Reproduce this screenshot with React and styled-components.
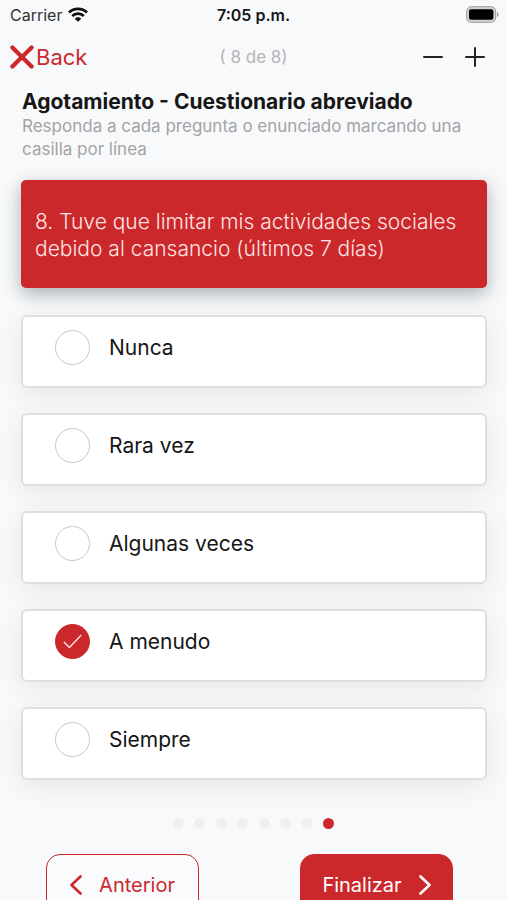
import React, { useState } from "react";
import styled, { createGlobalStyle } from "styled-components";

const red = "#cb282b";

const GlobalStyle = createGlobalStyle`
  * { box-sizing: border-box; }
  body {
    margin: 0;
    background: #f8f9fb;
    color: #161616;
    font-family: Inter, "Liberation Sans", sans-serif;
  }
  button, input { font: inherit; margin: 0; }
`;

const Screen = styled.div`
  height: 100vh;
  overflow: hidden auto;
  scrollbar-width: none;
  display: flex;
  flex-direction: column;
`;

const StatusBar = styled.header`
  flex: none;
  display: grid;
  grid-template-columns: 1fr auto 1fr;
  align-items: center;
  height: 29px;
  padding: 0 8px;
  font-size: 16px;
  line-height: 20px;
`;

const Carrier = styled.div`
  display: flex;
  align-items: center;
  gap: 6px;
  padding-left: 2px;
  color: #333;
`;

const Time = styled.time`
  font-weight: 600;
`;

const BatteryIcon = styled.svg`
  justify-self: end;
`;

const NavBar = styled.nav`
  flex: none;
  display: grid;
  grid-template-columns: 1fr auto 1fr;
  align-items: center;
  height: 56px;
  padding: 0 10px;
`;

const PlainButton = styled.button`
  display: flex;
  align-items: center;
  padding: 0;
  border: 0;
  background: none;
  color: inherit;
  cursor: pointer;
`;

const BackButton = styled(PlainButton)`
  gap: 2px;
  color: ${red};
  font-size: 22px;
  line-height: 28px;
`;

const Progress = styled.span`
  color: #b4b4b6;
  font-size: 17px;
`;

const ZoomControls = styled.div`
  display: flex;
  justify-content: flex-end;
  gap: 20px;
  padding-right: 11px;
`;

const Intro = styled.div`
  flex: none;
  padding: 4px 20px 0 22px;
`;

const Title = styled.h1`
  margin: 0;
  font-size: 21px;
  font-weight: 700;
  line-height: 26px;
`;

const Subtitle = styled.p`
  margin: 0;
  color: #a3a4a6;
  font-size: 17px;
  line-height: 23px;
`;

const Form = styled.fieldset`
  flex: none;
  min-width: 0;
  margin: 19px 20px 0 21px;
  padding: 0;
  border: 0;
`;

const Question = styled.legend`
  width: 100%;
  min-height: 108px;
  padding: 28px 14px 26px;
  border-radius: 5px;
  background: ${red};
  box-shadow: 0 6px 18px rgba(40, 60, 60, 0.38);
  color: #ffe4e3;
  font-size: 21px;
  font-weight: 300;
  line-height: 27px;
`;

const Options = styled.div`
  display: flex;
  flex-direction: column;
  gap: 25px;
  padding-top: 27px;
`;

const Option = styled.label`
  display: flex;
  align-items: flex-start;
  gap: 19px;
  height: 73px;
  padding: 13px 32px;
  border: 2px solid #dedfe0;
  border-radius: 6px;
  background: #fff;
  box-shadow: 0 6px 24px rgba(40, 50, 60, 0.09);
  font-size: 21px;
  line-height: 35px;
  cursor: pointer;
`;

const RadioMark = styled.span`
  flex: none;
  display: grid;
  place-items: center;
  width: 35px;
  height: 35px;

  > * { grid-area: 1 / 1; }
  svg { pointer-events: none; }
`;

const Radio = styled.input`
  appearance: none;
  width: 35px;
  height: 35px;
  border: 1px solid #c8c8ca;
  border-radius: 50%;
  background: #fff;
  cursor: pointer;

  &:checked {
    border-color: ${red};
    background: ${red};
  }
`;

const Dots = styled.div`
  flex: none;
  display: flex;
  justify-content: space-between;
  width: 162px;
  margin: 38px auto 0;
`;

const Dot = styled.span`
  width: 11px;
  height: 11px;
  border-radius: 50%;
  background: ${(p) => (p.$active ? red : "#eff0f2")};
`;

const Footer = styled.footer`
  flex: none;
  display: flex;
  justify-content: space-between;
  padding: 25px 54px 24px 46px;
`;

const ActionButton = styled.button`
  display: flex;
  align-items: center;
  justify-content: center;
  gap: 17px;
  width: 153px;
  height: 62px;
  padding: 0;
  border: 1px solid ${red};
  border-radius: 14px;
  background: ${(p) => (p.$filled ? red : "#fafbfc")};
  color: ${(p) => (p.$filled ? "#fff" : red)};
  font-size: 20px;
  line-height: 26px;
  cursor: pointer;
`;

const answers = ["Nunca", "Rara vez", "Algunas veces", "A menudo", "Siempre"];

const Chevron = ({ right }) => (
  <svg width="12" height="20" viewBox="0 0 12 20" fill="none" stroke="currentColor" strokeWidth="2.6" strokeLinecap="round" strokeLinejoin="round" aria-hidden="true">
    <path d={right ? "M1.5 1.5 10.5 10l-9 8.5" : "M10.5 1.5 1.5 10l9 8.5"} />
  </svg>
);

export default function App() {
  const [answer, setAnswer] = useState("A menudo");

  return (
    <Screen>
      <GlobalStyle />
      <StatusBar>
        <Carrier>
          Carrier
          <svg width="20" height="15" viewBox="0 0 20 15" fill="none" stroke="#111" strokeWidth="2.8" aria-label="Wi-Fi">
            <path d="M1 5.5a12.8 12.8 0 0 1 18 0M4.2 9a8.2 8.2 0 0 1 11.6 0" />
            <path d="M10 14.8 6.7 11.7a4.7 4.7 0 0 1 6.6 0Z" fill="#111" stroke="none" />
          </svg>
        </Carrier>
        <Time>7:05 p.m.</Time>
        <BatteryIcon width="33" height="17" viewBox="0 0 33 17" aria-label="Battery">
          <rect x="0.7" y="0.7" width="29" height="15.6" rx="4.5" fill="#d3d3d4" stroke="#9c9c9e" strokeWidth="1" />
          <rect x="3" y="3.2" width="24.4" height="10.6" rx="2" fill="#000" />
          <path d="M31 6.2c2 .6 2 4 0 4.6Z" fill="#9c9c9e" />
        </BatteryIcon>
      </StatusBar>

      <NavBar>
        <BackButton type="button">
          <svg width="24" height="24" viewBox="0 0 24 24" stroke="currentColor" strokeWidth="4.2" strokeLinecap="round" aria-hidden="true">
            <path d="M2.4 2.4 21.6 21.6M21.6 2.4 2.4 21.6" />
          </svg>
          Back
        </BackButton>
        <Progress>( 8 de 8)</Progress>
        <ZoomControls>
          <PlainButton type="button" aria-label="Reducir texto">
            <svg width="22" height="22" viewBox="0 0 22 22" stroke="#222" strokeWidth="2" strokeLinecap="round">
              <path d="M2 11h18" />
            </svg>
          </PlainButton>
          <PlainButton type="button" aria-label="Ampliar texto">
            <svg width="22" height="22" viewBox="0 0 22 22" stroke="#222" strokeWidth="2" strokeLinecap="round">
              <path d="M2 11h18M11 2v18" />
            </svg>
          </PlainButton>
        </ZoomControls>
      </NavBar>

      <Intro>
        <Title>Agotamiento - Cuestionario abreviado</Title>
        <Subtitle>Responda a cada pregunta o enunciado marcando una casilla por línea</Subtitle>
      </Intro>

      <Form>
        <Question>8. Tuve que limitar mis actividades sociales debido al cansancio (últimos 7 días)</Question>
        <Options>
          {answers.map((text) => (
            <Option key={text}>
              <RadioMark>
                <Radio type="radio" name="answer" value={text} checked={answer === text} onChange={() => setAnswer(text)} />
                {answer === text && (
                  <svg width="19" height="15" viewBox="0 0 19 15" fill="none" stroke="#ffe3e2" strokeWidth="1.4" strokeLinecap="round" strokeLinejoin="round" aria-hidden="true">
                    <path d="m1.2 8.2 5.2 5.4L17.8 1.4" />
                  </svg>
                )}
              </RadioMark>
              {text}
            </Option>
          ))}
        </Options>
      </Form>

      <Dots>
        {Array.from({ length: 8 }, (_, i) => (
          <Dot key={i} $active={i === 7} />
        ))}
      </Dots>

      <Footer>
        <ActionButton type="button">
          <Chevron />
          Anterior
        </ActionButton>
        <ActionButton type="button" $filled>
          Finalizar
          <Chevron right />
        </ActionButton>
      </Footer>
    </Screen>
  );
}
